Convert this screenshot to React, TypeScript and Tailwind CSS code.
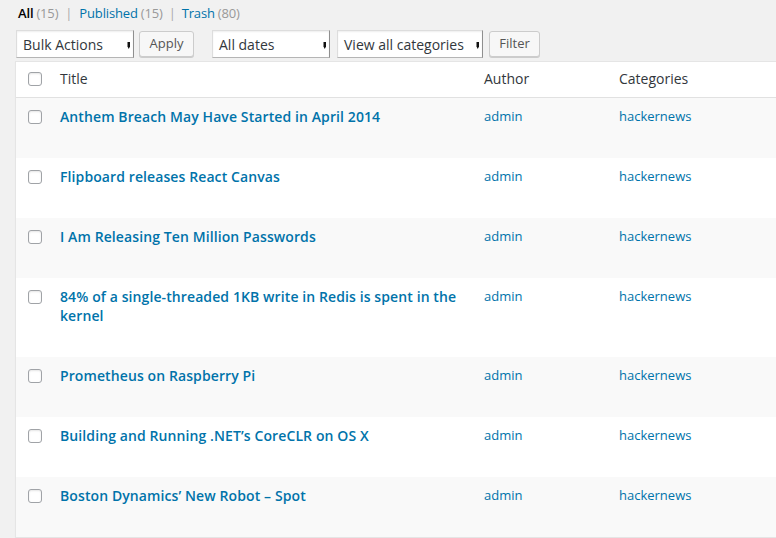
type Post = {
  title: string;
  author: string;
  category: string;
};

const posts: Post[] = [
  { title: "Anthem Breach May Have Started in April 2014", author: "admin", category: "hackernews" },
  { title: "Flipboard releases React Canvas", author: "admin", category: "hackernews" },
  { title: "I Am Releasing Ten Million Passwords", author: "admin", category: "hackernews" },
  { title: "84% of a single-threaded 1KB write in Redis is spent in the kernel", author: "admin", category: "hackernews" },
  { title: "Prometheus on Raspberry Pi", author: "admin", category: "hackernews" },
  { title: "Building and Running .NET\u2019s CoreCLR on OS X", author: "admin", category: "hackernews" },
  { title: "Boston Dynamics\u2019 New Robot \u2013 Spot", author: "admin", category: "hackernews" },
];

function Checkbox() {
  return (
    <span className="block h-[14px] w-[14px] rounded-[3px] border border-[#a0a3a7] bg-white shadow-[inset_0_1px_2px_rgba(0,0,0,0.1)]" />
  );
}

function Select({ label, width }: { label: string; width: string }) {
  return (
    <div
      className={`relative flex h-[28px] items-center border border-[#ddd] border-r-[#8f8f8f] border-b-[#b5b5b5] bg-white pl-[6px] text-[14px] text-[#32373c] shadow-[inset_0_1px_2px_rgba(0,0,0,0.07)] ${width}`}
    >
      <span>{label}</span>
      <svg
        className="absolute right-[2px] top-[11px]"
        width="4"
        height="7"
        viewBox="0 0 4 7"
      >
        <path d="M0.5 0 H3 V4.5 L1.8 7 L0.5 4.5 Z" fill="#111" />
      </svg>
    </div>
  );
}

function Button({ label, width }: { label: string; width: string }) {
  return (
    <button
      className={`mt-[1px] flex h-[26px] items-center justify-center rounded-[3px] border border-[#ccc] bg-[#f7f7f7] text-[13px] text-[#555] shadow-[0_1px_0_#ccc] ${width}`}
    >
      {label}
    </button>
  );
}

export default function App() {
  return (
    <div
      className="h-[538px] w-[776px] overflow-hidden bg-[#f1f1f1] pl-[15px] pt-[3px]"
      style={{ fontFamily: '"Open Sans", "Liberation Sans", sans-serif' }}
    >
      {/* status filters */}
      <div className="flex h-[20px] items-baseline pl-[3px] text-[13px] leading-[20px] tracking-[-0.15px]">
        <span className="font-semibold text-black">All</span>
        <span className="ml-[3px] text-[#999]">(15)</span>
        <span className="mx-[7px] text-[#aaa]">|</span>
        <span className="text-[#0073aa]">Published</span>
        <span className="ml-[3px] text-[#999]">(15)</span>
        <span className="mx-[6px] text-[#aaa]">|</span>
        <span className="text-[#0073aa]">Trash</span>
        <span className="ml-[3px] text-[#999]">(80)</span>
      </div>

      <div className="mt-[7px] flex items-start pl-[1px]">
        <Select label="Bulk Actions" width="w-[118px]" />
        <div className="ml-[5px]">
          <Button label="Apply" width="w-[55px]" />
        </div>
        <div className="ml-[18px]">
          <Select label="All dates" width="w-[118px]" />
        </div>
        <div className="ml-[7px]">
          <Select label="View all categories" width="w-[146px]" />
        </div>
        <div className="ml-[6px]">
          <Button label="Filter" width="w-[51px]" />
        </div>
      </div>

      <div className="mt-[3px] w-[960px] border border-[#e5e5e5] bg-white shadow-[0_1px_1px_rgba(0,0,0,0.04)]">
        <table className="w-full table-fixed border-collapse">
          <colgroup>
            <col className="w-[34px]" />
            <col className="w-[424px]" />
            <col className="w-[135px]" />
            <col />
          </colgroup>
          <thead>
            <tr className="h-[35px] border-b border-[#e1e1e1] text-left text-[14px] text-[#32373c]">
              <th className="p-0 pl-[12px] pt-[10px] align-top">
                <Checkbox />
              </th>
              <th className="px-[10px] pt-[7px] align-top font-normal leading-[19.6px]">Title</th>
              <th className="px-[10px] pt-[7px] align-top font-normal leading-[19.6px]">Author</th>
              <th className="px-[10px] pt-[7px] align-top font-normal leading-[19.6px]">Categories</th>
            </tr>
          </thead>
          <tbody>
            {posts.map((post, i) => (
              <tr key={post.title} className={i % 2 === 0 ? "bg-[#f9f9f9]" : "bg-white"}>
                <td className="p-0 pl-[12px] pt-[12px] align-top">
                  <Checkbox />
                </td>
                <td className="px-[10px] pt-[9px] pb-[31.5px] align-top text-[14px] font-semibold leading-[19.5px] tracking-[0.1px] text-[#0073aa]">
                  {post.title}
                </td>
                <td className="px-[10px] pt-[9px] align-top text-[13px] leading-[19.5px] text-[#0073aa]">
                  {post.author}
                </td>
                <td className="px-[10px] pt-[9px] align-top text-[13px] leading-[19.5px] text-[#0073aa]">
                  {post.category}
                </td>
              </tr>
            ))}
          </tbody>
        </table>
      </div>
    </div>
  );
}
